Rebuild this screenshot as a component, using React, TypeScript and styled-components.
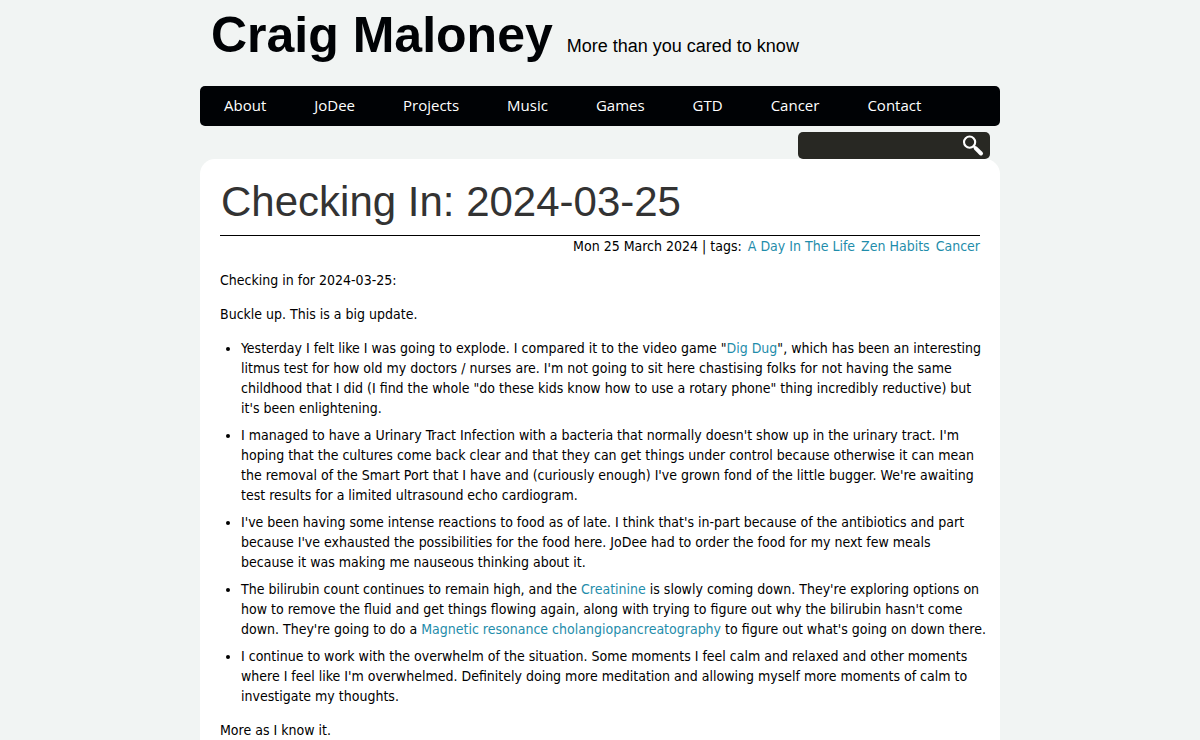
import React from "react";
import styled, { createGlobalStyle } from "styled-components";

const GlobalStyle = createGlobalStyle`
  * { box-sizing: border-box; }
  html { overflow-x: hidden; }
  body {
    margin: 0;
    background: #f1f4f3;
    color: #000;
    font: 14px/20px "Trebuchet MS", "DejaVu Sans Condensed", "Open Sans", sans-serif;
  }
`;

const Page = styled.div`
  max-width: 800px;
  margin: 0 auto;
`;

const Masthead = styled.header`
  display: flex;
  align-items: baseline;
  flex-wrap: wrap;
  gap: 14px;
  padding: 6px 11px 22px;
  font-family: Arial, "Liberation Sans", sans-serif;
`;

const SiteName = styled.a`
  color: #000205;
  font-size: 50px;
  line-height: 58px;
  font-weight: 700;
  text-decoration: none;
`;

const Tagline = styled.span`
  font-size: 18px;
  line-height: 24px;
`;

const Nav = styled.nav`
  display: flex;
  flex-wrap: wrap;
  min-height: 40px;
  background: #000205;
  border-radius: 5px;
`;

const NavLink = styled.a`
  padding: 0 24px;
  color: #fff;
  font-family: "Trebuchet MS", "Open Sans", sans-serif;
  font-size: 15px;
  line-height: 38px;
  font-weight: 500;
  text-decoration: none;
`;

const SearchRow = styled.div`
  display: flex;
  justify-content: flex-end;
  padding: 6px 10px 0;
`;

const SearchForm = styled.form`
  display: flex;
  width: 192px;
  height: 27px;
  background: #282823;
  border-radius: 5px;
`;

const SearchInput = styled.input`
  flex: 1;
  min-width: 0;
  padding: 0 8px;
  border: 0;
  outline: 0;
  background: transparent;
  color: #fff;
  font: inherit;
`;

const SearchButton = styled.button`
  width: 34px;
  padding: 0;
  border: 0;
  background: transparent;
  line-height: 0;
  cursor: pointer;
`;

const Article = styled.article`
  padding: 17px 20px 20px;
  background: #fff;
  border-radius: 15px 15px 0 0;
`;

const Title = styled.h1`
  margin: 0;
  padding: 0 1px 7px;
  border-bottom: 1px solid #000;
  color: #333;
  font: 400 42px/52px Arial, "Liberation Sans", sans-serif;
`;

const Meta = styled.p`
  display: flex;
  justify-content: flex-end;
  flex-wrap: wrap;
  gap: 6px;
  margin: 0 0 14px;
`;

const Link = styled.a`
  color: #1f8dab;
  text-decoration: none;
`;

const Paragraph = styled.p`
  margin: 0 0 14px;
`;

const Updates = styled.ul`
  margin: 0 0 14px;
  padding-left: 21px;
`;

const Update = styled.li`
  margin-bottom: 7px;
`;

const Line = styled.span`
  display: block;
  white-space: nowrap;

  @media (max-width: 820px) {
    display: inline;
    white-space: normal;
  }
`;

const sections = ["About", "JoDee", "Projects", "Music", "Games", "GTD", "Cancer", "Contact"];
const tags = ["A Day In The Life", "Zen Habits", "Cancer"];

const updates: React.ReactNode[][] = [
  [
    <>Yesterday I felt like I was going to explode. I compared it to the video game "<Link href="#dig-dug">Dig Dug</Link>", which has been an interesting</>,
    "litmus test for how old my doctors / nurses are. I'm not going to sit here chastising folks for not having the same",
    "childhood that I did (I find the whole \"do these kids know how to use a rotary phone\" thing incredibly reductive) but",
    "it's been enlightening.",
  ],
  [
    "I managed to have a Urinary Tract Infection with a bacteria that normally doesn't show up in the urinary tract. I'm",
    "hoping that the cultures come back clear and that they can get things under control because otherwise it can mean",
    "the removal of the Smart Port that I have and (curiously enough) I've grown fond of the little bugger. We're awaiting",
    "test results for a limited ultrasound echo cardiogram.",
  ],
  [
    "I've been having some intense reactions to food as of late. I think that's in-part because of the antibiotics and part",
    "because I've exhausted the possibilities for the food here. JoDee had to order the food for my next few meals",
    "because it was making me nauseous thinking about it.",
  ],
  [
    <>The bilirubin count continues to remain high, and the <Link href="#creatinine">Creatinine</Link> is slowly coming down. They're exploring options on</>,
    "how to remove the fluid and get things flowing again, along with trying to figure out why the bilirubin hasn't come",
    <>down. They're going to do a <Link href="#mrcp">Magnetic resonance cholangiopancreatography</Link> to figure out what's going on down there.</>,
  ],
  [
    "I continue to work with the overwhelm of the situation. Some moments I feel calm and relaxed and other moments",
    "where I feel like I'm overwhelmed. Definitely doing more meditation and allowing myself more moments of calm to",
    "investigate my thoughts.",
  ],
];

export default function App() {
  return (
    <>
      <GlobalStyle />
      <Page>
        <Masthead>
          <SiteName href="#home">Craig Maloney</SiteName>
          <Tagline>More than you cared to know</Tagline>
        </Masthead>
        <Nav aria-label="Main">
          {sections.map((name) => (
            <NavLink key={name} href={"#" + name.toLowerCase()}>{name}</NavLink>
          ))}
        </Nav>
        <SearchRow>
          <SearchForm role="search" onSubmit={(event) => event.preventDefault()}>
            <SearchInput type="text" aria-label="Search" />
            <SearchButton type="submit" aria-label="Submit search">
              <svg width="22" height="22" viewBox="0 0 22 22" fill="none" stroke="#fff">
                <circle cx="7.6" cy="7.1" r="5.6" strokeWidth="2.1" />
                <path d="M11.4 10.9l2.2 2.2" strokeWidth="2.4" />
                <path d="M13.8 13.3l5.2 5.2" strokeWidth="4" strokeLinecap="round" />
              </svg>
            </SearchButton>
          </SearchForm>
        </SearchRow>
        <Article>
          <Title>Checking In: 2024-03-25</Title>
          <Meta>
            <span>Mon 25 March 2024 | tags:</span>
            {tags.map((tag) => (
              <Link key={tag} href="#tag">{tag}</Link>
            ))}
          </Meta>
          <Paragraph>Checking in for 2024-03-25:</Paragraph>
          <Paragraph>Buckle up. This is a big update.</Paragraph>
          <Updates>
            {updates.map((lines, i) => (
              <Update key={i}>
                {lines.map((line, j) => (
                  <Line key={j}>{line} </Line>
                ))}
              </Update>
            ))}
          </Updates>
          <Paragraph>More as I know it.</Paragraph>
        </Article>
      </Page>
    </>
  );
}
